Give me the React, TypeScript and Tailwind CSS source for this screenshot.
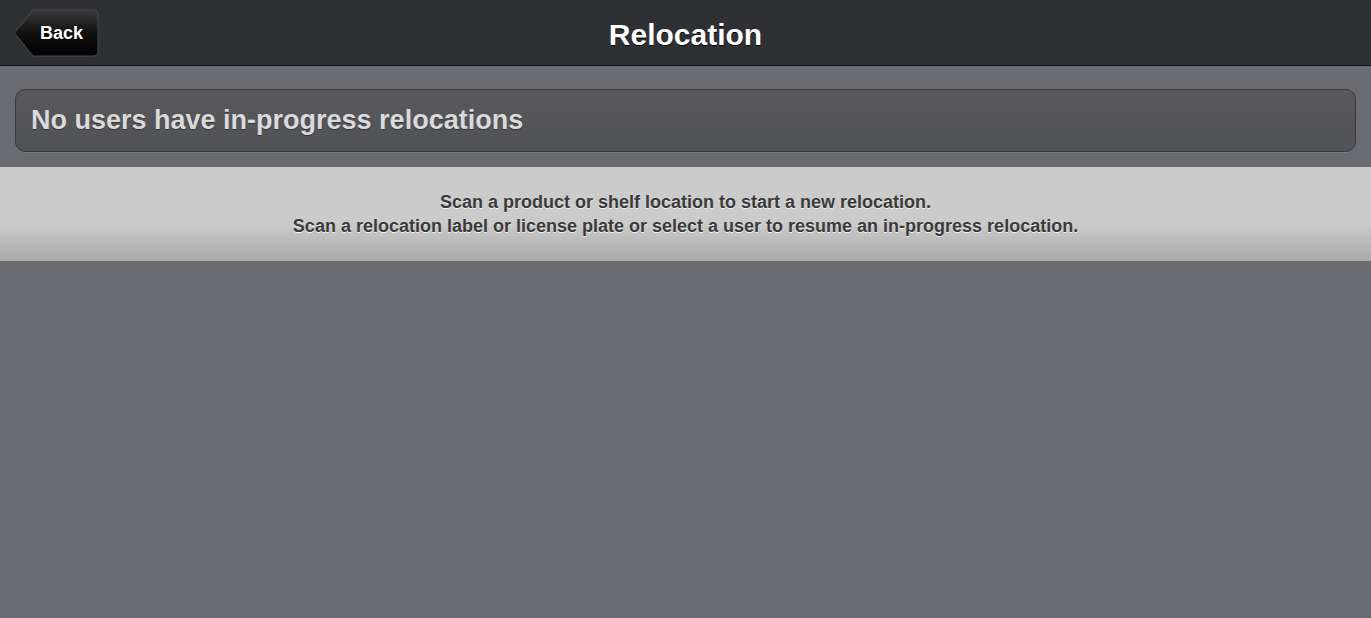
export default function App() {
  return (
    <div className="min-h-[618px] w-full bg-[#6a6b70] font-['Liberation_Sans',Arial,sans-serif]">
      {/* Header */}
      <header className="relative flex h-[66px] items-center justify-center border-b border-[#111] bg-[#2f3033]">
        <button className="absolute left-[14px] top-[9px] flex h-[48px] w-[85px] items-center justify-end pr-[16px]">
          <svg className="absolute inset-0" width="85" height="48" viewBox="0 0 85 48">
            <defs>
              <linearGradient id="backg" x1="0" y1="0" x2="0" y2="1">
                <stop offset="0" stopColor="#3a3a3a" />
                <stop offset="0.5" stopColor="#111" />
                <stop offset="1" stopColor="#000" />
              </linearGradient>
            </defs>
            <path d="M0.5,24 L19,1 H79 Q84,1 84,6 V42 Q84,47 79,47 H19 Z" fill="url(#backg)" stroke="#4a4a4a" strokeWidth="1" />
          </svg>
          <span className="relative text-[18px] font-bold text-white [text-shadow:0_1px_0_#000]">Back</span>
        </button>
        <h1 className="pt-[3px] text-[30px] font-bold text-white [text-shadow:0_1px_0_#000]">Relocation</h1>
      </header>

      {/* Content */}
      <main className="px-[15px] pb-[15px] pt-[23px]">
        <div className="flex h-[63px] items-center rounded-[10px] border border-[#3a3a3c] bg-gradient-to-b from-[#59595c] to-[#515255] px-[15px] shadow-[0_1px_0_#7a7b80]">
          <span className="text-[27px] font-bold text-[#dadadc] [text-shadow:0_1px_0_#333]">No users have in-progress relocations</span>
        </div>
      </main>

      {/* Footer hint */}
      <div className="flex h-[94px] flex-col items-center justify-center bg-gradient-to-b from-[#cbcbcb] from-60% to-[#a9a9a9] pb-[1px] text-center text-[18px] font-bold leading-[24px] text-[#3a3a3a] [text-shadow:0_1px_0_#eee]">
        <p>Scan a product or shelf location to start a new relocation.</p>
        <p>Scan a relocation label or license plate or select a user to resume an in-progress relocation.</p>
      </div>
    </div>
  );
}
